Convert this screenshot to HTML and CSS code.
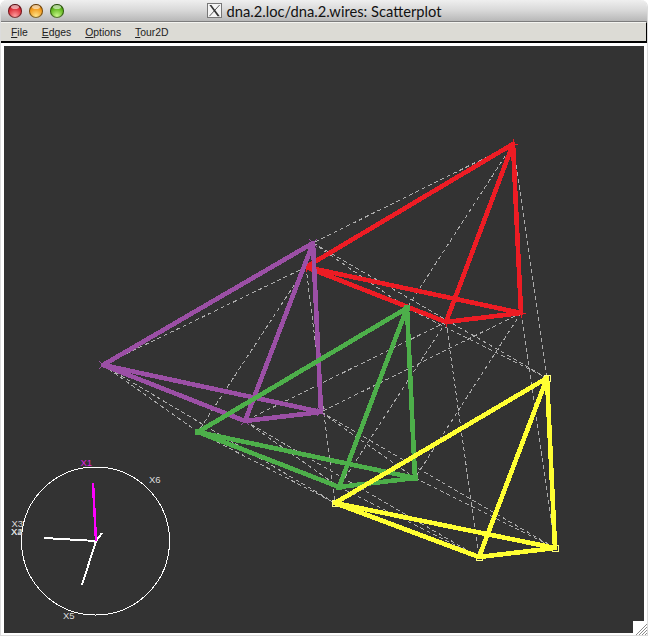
FILE: index.html
```html
<!DOCTYPE html>
<html lang="en">
<head>
    <meta charset="UTF-8">
    <title>dna.2.loc/dna.2.wires: Scatterplot</title>
    <link rel="stylesheet" href="styles.css">
</head>
<body>
    <div class="window">
        <div class="titlebar">
            <div class="lights">
                <span class="light red"></span>
                <span class="light orange"></span>
                <span class="light green"></span>
            </div>
            <div class="title">
                <svg class="xicon" width="15" height="15" viewBox="0 0 15 15">
                    <rect x="0.5" y="0.5" width="14" height="14" fill="#f4f4f4" stroke="#777"/>
                    <path d="M2.4 2 H4.4 L12.8 13.2 H10.6 Z" fill="#333"/>
                    <path d="M12.6 2 L2.4 13.2" fill="none" stroke="#333" stroke-width="0.8"/>
                </svg>
                <span>dna.2.loc/dna.2.wires: Scatterplot</span>
            </div>
        </div>
        <div class="menubar">
            <span class="menu"><u>F</u>ile</span>
            <span class="menu"><u>E</u>dges</span>
            <span class="menu"><u>O</u>ptions</span>
            <span class="menu"><u>T</u>our2D</span>
        </div>
        <div class="plotwrap">
            <div class="plot">
                <svg id="scatter" class="canvas" width="640" height="587" viewBox="4 46 640 587"></svg>
                <div class="grip">
                    <svg width="14" height="15" viewBox="0 0 14 15">
                        <path d="M2 15 L14 3 M5 15 L14 6 M8 15 L14 9 M11 15 L14 12" stroke="#8a8a8a" stroke-width="1" fill="none"/>
                    </svg>
                </div>
            </div>
        </div>
    </div>
    <script src="plot.js"></script>
</body>
</html>
```

FILE: styles.css
```css
html, body {
    margin: 0;
    padding: 0;
    background: #fff;
}
.window {
    box-sizing: border-box;
    width: 648px;
    height: 636px;
    display: flex;
    flex-direction: column;
    overflow: hidden;
    border: 1px solid #dcdcdc;
    border-top: none;
    border-radius: 7px 7px 0 0;
    font-family: "Liberation Sans", Arial, sans-serif;
}
.titlebar {
    height: 21px;
    flex: none;
    display: flex;
    align-items: center;
    position: relative;
    background: linear-gradient(to bottom, #efefef 0%, #d8d8d8 50%, #b8b8b8 100%);
    border-bottom: 1px solid #7d7d7d;
}
.lights {
    display: flex;
    gap: 7px;
    padding: 1px 0 0 7px;
}
.light {
    position: relative;
    width: 14px;
    height: 14px;
    border-radius: 50%;
    box-shadow: inset 0 0 0 1px rgba(0, 0, 0, 0.5);
}
.light::after {
    content: "";
    position: absolute;
    left: 3px;
    top: 1px;
    width: 8px;
    height: 4px;
    border-radius: 50%;
    background: rgba(255, 255, 255, 0.55);
}
.light.red { background: radial-gradient(circle at 50% 85%, #ff9c9c 0%, #dc2f38 55%, #8a141b 100%); }
.light.orange { background: radial-gradient(circle at 50% 85%, #ffe388 0%, #f29a1c 55%, #a65e08 100%); }
.light.green { background: radial-gradient(circle at 50% 85%, #c8f78a 0%, #62b820 55%, #37780f 100%); }
.title {
    position: absolute;
    left: 0;
    right: 0;
    top: 0;
    bottom: 0;
    display: flex;
    justify-content: center;
    align-items: center;
    gap: 5px;
    font-family: "Lato", "Liberation Sans", sans-serif;
    font-size: 14.7px;
    color: #111;
}
.menubar {
    height: 18px;
    flex: none;
    display: flex;
    align-items: center;
    gap: 14px;
    padding-left: 10px;
    background: #dcdbd5;
    border-top: 1px solid #f4f4f0;
    border-bottom: 2px solid #000;
    border-right: 1px solid #000;
    font-size: 10.4px;
    color: #222;
}
.plotwrap {
    flex: 1;
    padding: 3px 3px 2px 3px;
    background: #fff;
    min-height: 0;
}
.plot {
    position: relative;
    width: 640px;
    height: 587px;
    background: #333;
}
.canvas {
    display: block;
}
.canvas line, .canvas rect, .canvas circle {
    shape-rendering: crispEdges;
}
.grip {
    position: absolute;
    right: -3px;
    bottom: -2px;
    width: 14px;
    height: 14px;
    background: #fff;
    overflow: hidden;
}
.grip svg {
    display: block;
}
.edge {
    fill: none;
    stroke-width: 4.6;
    stroke-linecap: round;
}
.dash {
    stroke: #adadad;
    stroke-width: 1;
    stroke-dasharray: 4 3;
}
.mark {
    fill: none;
    stroke-width: 1;
}
.axis {
    stroke: #fff;
    stroke-width: 2;
}
.axis.first {
    stroke: #f0f;
    stroke-width: 2.5;
}
.circle {
    fill: none;
    stroke: #fff;
    stroke-width: 1;
}
.label {
    font-family: "Liberation Sans", Arial, sans-serif;
    font-size: 9.5px;
    fill: #ddd;
}
.label.first {
    fill: #e020e0;
}
```

FILE: plot.js
```js
var NS = "http://www.w3.org/2000/svg";
var svg = document.getElementById("scatter");

// top, left, right, bottom of each tetrahedron
var shapes = [
    { color: "#ed1c24", glyph: "plus", pts: [[513,144],[306,267],[521,313],[446,322]] },
    { color: "#9b4fa5", glyph: "cross", pts: [[313,243],[103,365],[321,412],[245,421]] },
    { color: "#4daf4a", glyph: "ring", pts: [[407,308],[198,432],[415,478],[339,487]] },
    { color: "#ffff33", glyph: "square", pts: [[547,378],[335,503],[555,548],[479,557]] }
];
var pairs = [[0,1],[0,2],[0,3],[1,2],[1,3],[2,3]];

function add(tag, attrs, text) {
    var el = document.createElementNS(NS, tag);
    for (var k in attrs) el.setAttribute(k, attrs[k]);
    if (text) el.textContent = text;
    svg.appendChild(el);
    return el;
}

function mark(glyph, c, color) {
    var x = c[0], y = c[1];
    if (glyph === "plus") {
        add("line", { x1: x - 5, y1: y, x2: x + 5, y2: y, "class": "mark", stroke: color });
        add("line", { x1: x, y1: y - 5, x2: x, y2: y + 5, "class": "mark", stroke: color });
    } else if (glyph === "cross") {
        add("line", { x1: x - 4, y1: y - 4, x2: x + 4, y2: y + 4, "class": "mark", stroke: color });
        add("line", { x1: x - 4, y1: y + 4, x2: x + 4, y2: y - 4, "class": "mark", stroke: color });
    } else if (glyph === "ring") {
        add("circle", { cx: x, cy: y, r: 3, "class": "mark", stroke: color });
    } else {
        add("rect", { x: x - 3, y: y - 3, width: 6, height: 6, "class": "mark", stroke: "#ffff80" });
    }
}

// wires between matching corners
pairs.forEach(function (p) {
    for (var i = 0; i < 4; i++) {
        var a = shapes[p[0]].pts[i], b = shapes[p[1]].pts[i];
        add("line", { x1: a[0], y1: a[1], x2: b[0], y2: b[1], "class": "dash" });
    }
});

shapes.forEach(function (s) {
    s.pts.forEach(function (c) {
        mark(s.glyph, c, s.color);
    });
    pairs.forEach(function (p) {
        var a = s.pts[p[0]], b = s.pts[p[1]];
        add("line", { x1: a[0], y1: a[1], x2: b[0], y2: b[1], "class": "edge", stroke: s.color });
    });
});

// tour axes
add("circle", { cx: 95.5, cy: 541, r: 74, "class": "circle" });
add("line", { x1: 96, y1: 541, x2: 44, y2: 538, "class": "axis" });
add("line", { x1: 96, y1: 541, x2: 82, y2: 585, "class": "axis" });
add("line", { x1: 96, y1: 541, x2: 102, y2: 533, "class": "axis" });
add("line", { x1: 96, y1: 541, x2: 93, y2: 483, "class": "axis first" });

add("text", { x: 80.5, y: 466, "class": "label first" }, "X1");
add("text", { x: 149, y: 483, "class": "label" }, "X6");
add("text", { x: 11.5, y: 527, "class": "label" }, "X3");
add("text", { x: 11, y: 535, "class": "label" }, "X2");
add("text", { x: 11, y: 535, "class": "label" }, "X4");
add("text", { x: 63, y: 619, "class": "label" }, "X5");
```
